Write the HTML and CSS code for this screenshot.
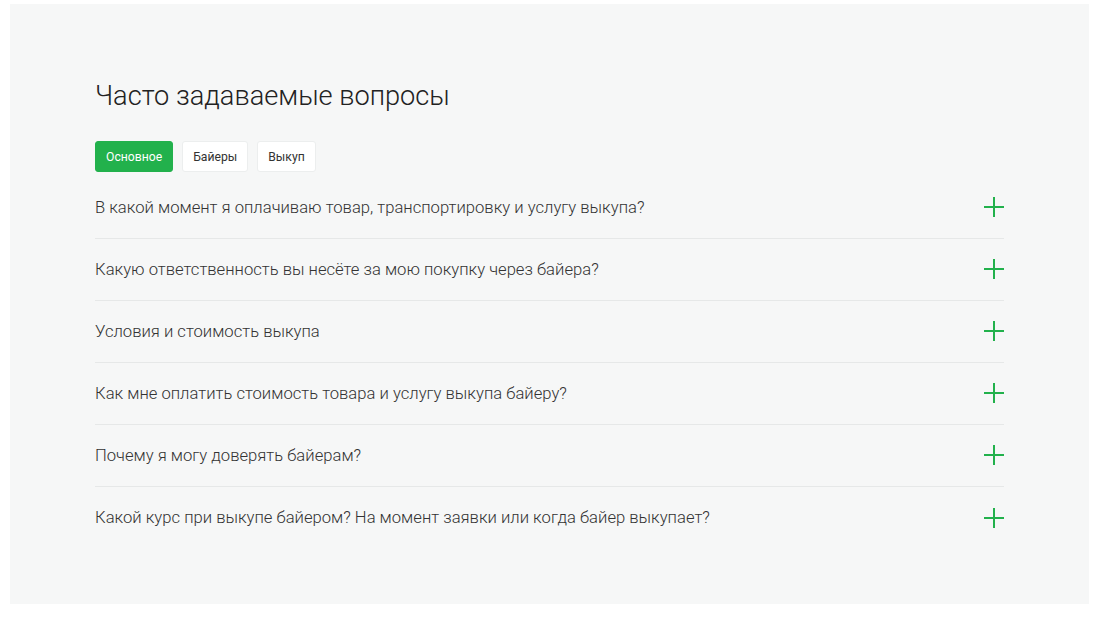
FILE: index.html
```html
<!DOCTYPE html>
<html lang="ru">
<head>
<meta charset="utf-8">
<link rel="stylesheet" href="styles.css">
</head>
<body>
<section class="faq">
  <h1 class="faq-title">Часто задаваемые вопросы</h1>
  <div class="tabs">
    <button class="tab tab-active">Основное</button>
    <button class="tab">Байеры</button>
    <button class="tab">Выкуп</button>
  </div>
  <ul class="list">
    <li class="item"><span class="q">В какой момент я оплачиваю товар, транспортировку и услугу выкупа?</span><svg class="plus" width="20" height="20" viewBox="0 0 20 20"><path d="M10 0V20M0 10H20" stroke="#22b14c" stroke-width="2"/></svg></li>
    <li class="item"><span class="q">Какую ответственность вы несёте за мою покупку через байера?</span><svg class="plus" width="20" height="20" viewBox="0 0 20 20"><path d="M10 0V20M0 10H20" stroke="#22b14c" stroke-width="2"/></svg></li>
    <li class="item"><span class="q">Условия и стоимость выкупа</span><svg class="plus" width="20" height="20" viewBox="0 0 20 20"><path d="M10 0V20M0 10H20" stroke="#22b14c" stroke-width="2"/></svg></li>
    <li class="item"><span class="q">Как мне оплатить стоимость товара и услугу выкупа байеру?</span><svg class="plus" width="20" height="20" viewBox="0 0 20 20"><path d="M10 0V20M0 10H20" stroke="#22b14c" stroke-width="2"/></svg></li>
    <li class="item"><span class="q">Почему я могу доверять байерам?</span><svg class="plus" width="20" height="20" viewBox="0 0 20 20"><path d="M10 0V20M0 10H20" stroke="#22b14c" stroke-width="2"/></svg></li>
    <li class="item item-last"><span class="q">Какой курс при выкупе байером? На момент заявки или когда байер выкупает?</span><svg class="plus" width="20" height="20" viewBox="0 0 20 20"><path d="M10 0V20M0 10H20" stroke="#22b14c" stroke-width="2"/></svg></li>
  </ul>
</section>
</body>
</html>
```
FILE: styles.css
```css
html, body {
  margin: 0;
  padding: 0;
  background: #ffffff;
}
body {
  font-family: Roboto, "Noto Sans", sans-serif;
  color: #333;
}
.faq {
  box-sizing: border-box;
  margin: 4px 11px 0 10px;
  height: 600px;
  background: #f6f7f7;
  padding: 76px 85px 0 85px;
}
.faq-title {
  margin: 0;
  font-family: "Roboto Light", Roboto, sans-serif;
  font-size: 27.2px;
  line-height: 33px;
  font-weight: 300;
  color: #222;
}
.tabs {
  display: flex;
  gap: 9px;
  margin-top: 28px;
}
.tab {
  box-sizing: border-box;
  height: 31px;
  padding: 0 10px;
  border: 1px solid #eceeee;
  border-radius: 3px;
  background: #fff;
  font-family: Roboto, sans-serif;
  font-size: 12.2px;
  font-weight: 400;
  color: #333;
}
.tab-active {
  background: #22b14c;
  border-color: #22b14c;
  color: #fff;
}
.list {
  list-style: none;
  margin: 5px 0 0 0;
  padding: 0;
}
.item {
  display: flex;
  align-items: center;
  justify-content: space-between;
  height: 62px;
  box-sizing: border-box;
  border-bottom: 1px solid #e6e8e8;
  padding-bottom: 1px;
}
.item-last {
  border-bottom: none;
}
.q {
  font-family: "Roboto Light", Roboto, sans-serif;
  font-size: 16.65px;
  font-weight: 300;
  color: #333;
}
.plus {
  display: block;
}
```
